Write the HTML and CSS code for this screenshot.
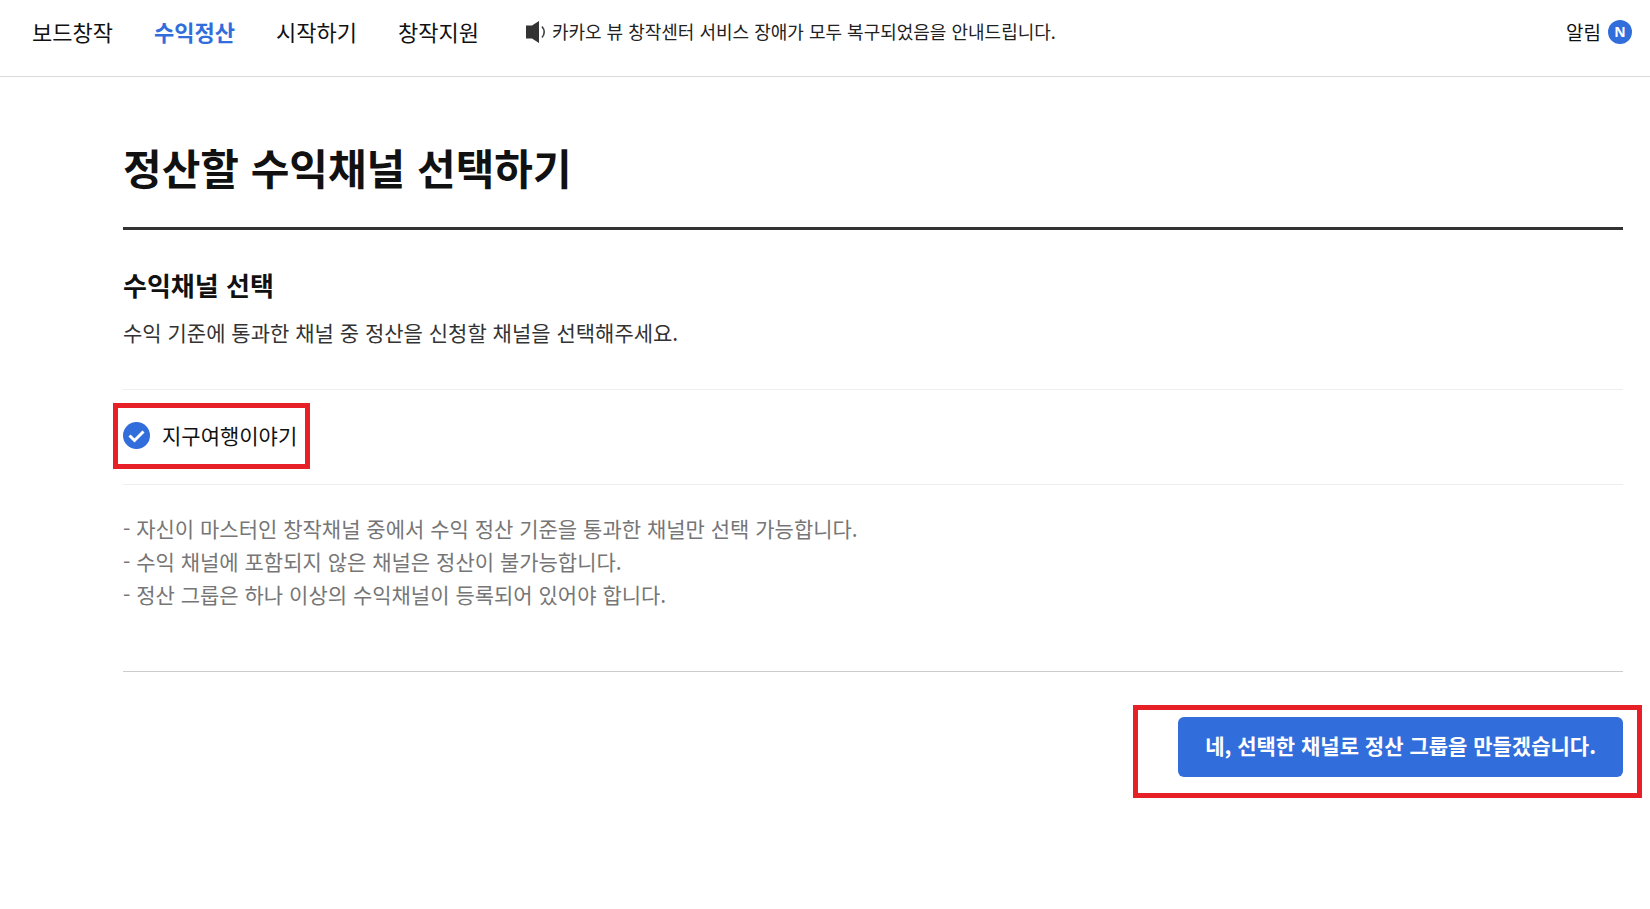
FILE: index.html
```html
<!DOCTYPE html>
<html lang="ko">
<head>
    <meta charset="UTF-8">
    <meta name="viewport" content="width=device-width, initial-scale=1.0">
    <title>정산할 수익채널 선택하기</title>
    <link rel="stylesheet" href="styles.css">
</head>
<body>
    <header class="header">
        <nav class="gnb">
            <a href="#">보드창작</a>
            <a href="#" class="on">수익정산</a>
            <a href="#">시작하기</a>
            <a href="#">창작지원</a>
        </nav>
        <a href="#" class="notice">
            <svg class="ico-speaker" width="20" height="22" viewBox="0 0 20 22" aria-hidden="true">
                <path d="M0 4.500h6l7-4.500v22l-7-4.500H0z" fill="#333"/>
                <path d="M16 5.500q4.400 5.500 0 11" fill="none" stroke="#444" stroke-width="1.600"/>
            </svg>
            <span>카카오 뷰 창작센터 서비스 장애가 모두 복구되었음을 안내드립니다.</span>
        </a>
        <a href="#" class="alarm">알림 <span class="badge">N</span></a>
    </header>

    <main class="content">
        <h1>정산할 수익채널 선택하기</h1>
        <form class="form">
            <h2>수익채널 선택</h2>
            <p class="desc">수익 기준에 통과한 채널 중 정산을 신청할 채널을 선택해주세요.</p>
            <div class="channels">
                <div class="channel mark">
                    <input type="checkbox" id="channel1" checked>
                    <label for="channel1">지구여행이야기</label>
                </div>
            </div>
            <ul class="notes">
                <li>- 자신이 마스터인 창작채널 중에서 수익 정산 기준을 통과한 채널만 선택 가능합니다.</li>
                <li>- 수익 채널에 포함되지 않은 채널은 정산이 불가능합니다.</li>
                <li>- 정산 그룹은 하나 이상의 수익채널이 등록되어 있어야 합니다.</li>
            </ul>
            <div class="actions">
                <div class="submit mark">
                    <button type="button" class="btn">네, 선택한 채널로 정산 그룹을 만들겠습니다.</button>
                </div>
            </div>
        </form>
    </main>
</body>
</html>
```

FILE: styles.css
```css
* {
    box-sizing: border-box;
}
body {
    margin: 0;
    font-family: "Noto Sans CJK KR", sans-serif;
    font-size: 21px;
    color: #111;
    background: #fff;
}
a {
    color: inherit;
    text-decoration: none;
}
h1, h2, p, ul {
    margin: 0;
    padding: 0;
}

/* header */
.header {
    display: flex;
    align-items: center;
    height: 77px;
    padding: 0 18px 12px 32px;
    border-bottom: 1px solid #d9dcdc;
}
.gnb {
    display: flex;
    gap: 41px;
    padding-bottom: 2px;
    font-size: 22px;
    line-height: 32px;
}
.gnb .on {
    color: #326ddc;
    font-weight: 700;
}
.notice {
    display: flex;
    align-items: center;
    gap: 6px;
    margin-left: 47px;
    font-size: 18px;
    line-height: 26px;
    color: #222;
}
.notice span {
    padding-bottom: 2px;
}
.alarm {
    display: flex;
    align-items: center;
    gap: 7px;
    margin-left: auto;
    font-size: 19px;
    line-height: 28px;
}
.badge {
    width: 24px;
    height: 24px;
    border-radius: 50%;
    background: #326ddc;
    color: #fff;
    font-family: "Noto Sans", sans-serif;
    font-size: 14px;
    font-weight: 700;
    line-height: 24px;
    text-align: center;
}

/* content */
.content {
    padding: 59px 27px 60px 123px;
}
h1 {
    padding-bottom: 29px;
    border-bottom: 3px solid #333;
    font-size: 42px;
    line-height: 62px;
}
.form {
    padding-top: 36px;
}
h2 {
    font-size: 26px;
    line-height: 38px;
}
.desc {
    margin-top: 12px;
    line-height: 32px;
    color: #333;
}
.channels {
    margin-top: 41px;
    padding: 30px 0 34px;
    border-top: 1px solid #eee;
    border-bottom: 1px solid #eee;
}
.channel {
    display: inline-flex;
    align-items: center;
    gap: 12px;
    vertical-align: top;
    line-height: 30px;
}
.channel input {
    appearance: none;
    width: 27px;
    height: 27px;
    margin: 0;
    border: 1px solid #ccc;
    border-radius: 50%;
}
.channel input:checked {
    border: 0;
    background: #326ddc url("data:image/svg+xml,%3Csvg xmlns='http://www.w3.org/2000/svg' viewBox='0 0 27 27'%3E%3Cpath d='M6.500 13.500l5 5 9-9' fill='none' stroke='white' stroke-width='3'/%3E%3C/svg%3E");
}
.notes {
    margin-top: 27px;
    list-style: none;
    line-height: 33px;
    color: #767676;
}
.actions {
    display: flex;
    justify-content: flex-end;
    margin-top: 60px;
    padding-top: 45px;
    border-top: 1px solid #ccc;
}
.btn {
    display: block;
    padding: 13px 27px 17px;
    border: 0;
    border-radius: 6px;
    background: #326ddc;
    color: #fff;
    font-family: inherit;
    font-size: 21px;
    font-weight: 700;
    line-height: 30px;
}

/* red guide boxes */
.mark {
    position: relative;
}
.mark::after {
    content: "";
    position: absolute;
    border: 5px solid #e71f26;
    pointer-events: none;
}
.channel::after {
    inset: -17px -13px -19px -10px;
}
.submit::after {
    inset: -12px -19px -21px -45px;
}
```
